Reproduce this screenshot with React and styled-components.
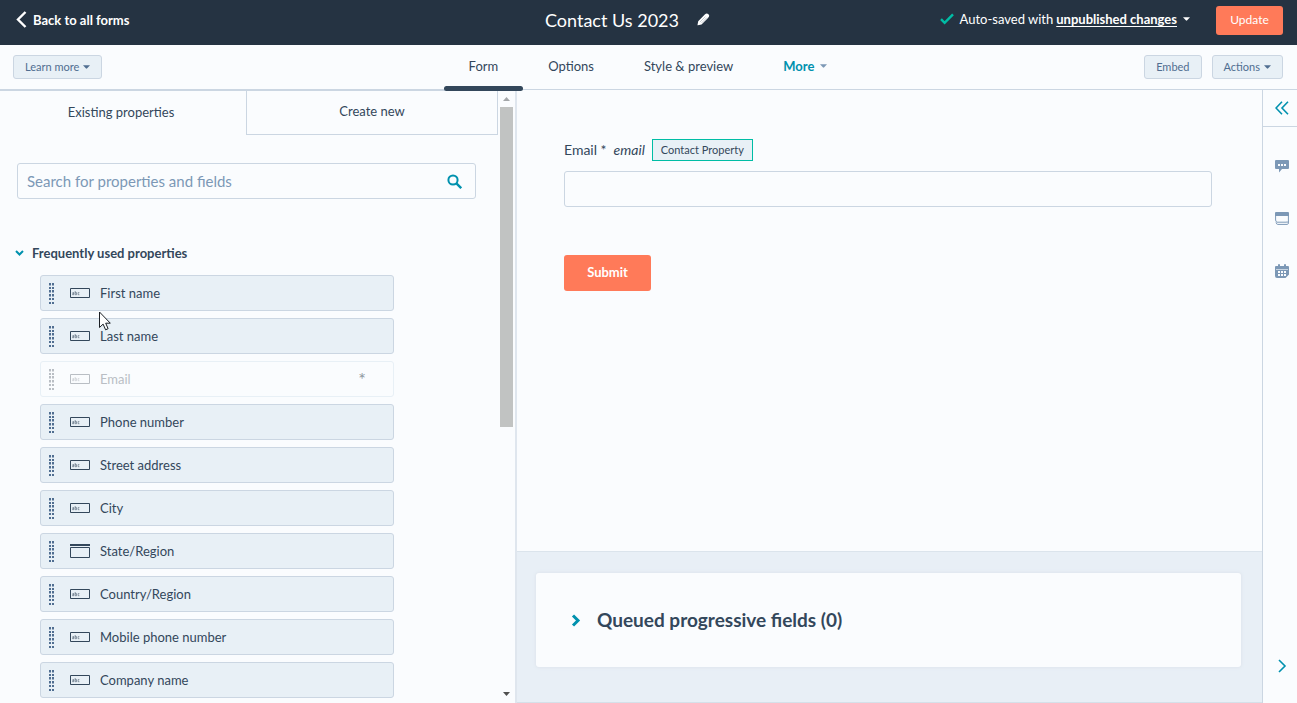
import styled, { createGlobalStyle, css } from 'styled-components';

const GlobalStyle = createGlobalStyle`
  * {
    box-sizing: border-box;
  }

  body {
    margin: 0;
    background: #fafcfe;
    color: #33475b;
    font-family: Lato, 'Open Sans', sans-serif;
    font-size: 14px;
    line-height: 20px;
  }

  button,
  input {
    font-family: inherit;
    color: inherit;
  }

  button {
    padding: 0;
    border: 0;
    background: none;
    cursor: pointer;
  }

  svg {
    display: block;
    flex: none;
  }
`;

const Page = styled.div`
  display: flex;
  flex-direction: column;
  height: 100vh;
  overflow: hidden;
`;

const TopBar = styled.header`
  display: grid;
  grid-template-columns: 1fr auto 1fr;
  align-items: center;
  flex: none;
  height: 45px;
  padding: 0 14px 4px 16px;
  background: #253342;
  color: #fff;
`;

const BackLink = styled.a`
  display: flex;
  align-items: center;
  justify-self: start;
  gap: 6px;
  padding-bottom: 2px;
  color: #fff;
  font-size: 13px;
  font-weight: 700;
  text-decoration: none;
`;

const TitleGroup = styled.div`
  display: flex;
  align-items: center;
  gap: 18px;
  padding: 0 44px 2px 0;
`;

const Title = styled.h1`
  margin: 0;
  font-size: 18px;
  font-weight: 400;
  line-height: 24px;
`;

const SaveArea = styled.div`
  display: flex;
  align-items: center;
  justify-self: end;
`;

const SaveState = styled.div`
  display: flex;
  align-items: center;
  padding-bottom: 3px;
  font-size: 13px;
`;

const SaveStatus = styled.p`
  margin: 0 0 0 6px;
`;

const ChangesButton = styled.button`
  display: inline-flex;
  align-items: center;
  gap: 6px;
  margin-left: 3px;
  font-size: 13px;
  font-weight: 700;
`;

const Underlined = styled.span`
  text-decoration: underline;
  text-underline-offset: 2px;
`;

const UpdateButton = styled.button`
  height: 29px;
  min-width: 67px;
  margin-left: 26px;
  padding-bottom: 2px;
  border-radius: 3px;
  background: #ff7a59;
  font-size: 12px;
`;

const SubHeader = styled.div`
  display: grid;
  grid-template-columns: 1fr auto 1fr;
  flex: none;
  height: 45px;
  padding: 0 14px 0 13px;
  border-bottom: 1px solid #cbd6e2;
`;

const ButtonGroup = styled.div`
  display: flex;
  align-items: center;
  justify-content: ${({ $end }) => ($end ? 'flex-end' : 'flex-start')};
  gap: 10px;
`;

const SmallButton = styled.button`
  display: flex;
  align-items: center;
  justify-content: center;
  gap: 4px;
  height: 24px;
  padding: 0 11px 1px;
  border: 1px solid #cbd6e2;
  border-radius: 3px;
  background: #e8f0f6;
  color: #506e91;
  font-size: 11px;
`;

const EditorTabs = styled.nav`
  display: flex;
`;

const EditorTab = styled.button`
  position: relative;
  display: flex;
  align-items: center;
  gap: 6px;
  padding: 0 25px 2px;
  font-size: 13px;

  ${({ $active }) =>
    $active &&
    css`
      &::after {
        content: '';
        position: absolute;
        left: 0;
        right: 0;
        bottom: -2px;
        height: 5px;
        border-radius: 3px;
        background: #33475b;
      }
    `}

  ${({ $more }) =>
    $more &&
    css`
      color: #0091ae;
      font-weight: 700;
    `}
`;

const Workspace = styled.div`
  display: flex;
  flex: 1;
  min-height: 0;
`;

const Panel = styled.aside`
  display: flex;
  flex: 0 0 515px;
  min-height: 0;
`;

const PanelContent = styled.div`
  flex: 1;
  overflow: hidden;
`;

const PanelTabs = styled.div`
  display: flex;
`;

const PanelTab = styled.button`
  flex: 1;
  height: 45px;
  padding-bottom: 3px;
  border-top: 1px solid #cbd6e2;
  font-size: 13px;

  ${({ $active }) =>
    $active
      ? css`
          padding-right: 4px;
        `
      : css`
          flex: 0 0 252px;
          border: 1px solid #cbd6e2;
        `}
`;

const SearchBox = styled.div`
  display: flex;
  align-items: center;
  height: 36px;
  margin: 28px 22px 0 17px;
  padding: 0 13px 0 9px;
  border: 1px solid #cbd6e2;
  border-radius: 3px;
`;

const SearchInput = styled.input`
  flex: 1;
  min-width: 0;
  padding: 0;
  border: 0;
  outline: 0;
  background: none;
  font-size: 15px;

  &::placeholder {
    color: #7c98b6;
    opacity: 1;
  }
`;

const GroupToggle = styled.button`
  display: flex;
  align-items: center;
  gap: 8px;
  height: 20px;
  margin: 44px 0 0 15px;
  padding-bottom: 1px;
  font-size: 13px;
  font-weight: 700;
`;

const PropertyList = styled.ul`
  display: flex;
  flex-direction: column;
  gap: 7px;
  margin: 12px 104px 0 40px;
  padding: 0;
  list-style: none;
`;

const PropertyRow = styled.li`
  display: flex;
  align-items: center;
  height: 36px;
  padding: 0 27px 0 8px;
  border: 1px solid #cbd6e2;
  border-radius: 3px;
  background: #e8f0f6;
  cursor: grab;

  ${({ $used }) =>
    $used &&
    css`
      border-color: #e8f0f6;
      background: transparent;
      color: #b9bec4;
    `}
`;

const PropertyName = styled.span`
  flex: 1;
  margin-left: 10px;
  font-size: 13px;
`;

const RequiredMark = styled.span`
  color: #8f979f;
  font-size: 18px;
`;

const TypeIcon = styled.span`
  margin-left: 15px;
`;

const ScrollTrack = styled.div`
  display: flex;
  flex-direction: column;
  align-items: center;
  width: 17px;
  padding: 7px 0;
`;

const ScrollThumb = styled.div`
  flex: 0 0 320px;
  width: 13px;
  margin: 6px 0 auto;
  background: #c1c3c2;
`;

const Canvas = styled.main`
  display: flex;
  flex: 1;
  flex-direction: column;
  min-width: 0;
  border-left: 2px solid #dfe6ee;
`;

const FormPreview = styled.form`
  flex: 1;
  padding: 49px 50px 0 47px;
`;

const FieldLabel = styled.div`
  display: flex;
  align-items: center;
  gap: 7px;
  height: 22px;
`;

const InternalName = styled.em`
  font-size: 14px;
`;

const ContactTag = styled.span`
  padding: 0 8px;
  border: 1px solid #00bda5;
  background: #e8f0f6;
  font-size: 11px;
`;

const FieldInput = styled.input`
  display: block;
  width: 100%;
  height: 36px;
  margin-top: 10px;
  padding: 0 10px;
  border: 1px solid #cbd6e2;
  border-radius: 3px;
  background: transparent;
  font-size: 14px;
`;

const SubmitButton = styled.button`
  height: 36px;
  min-width: 87px;
  margin-top: 48px;
  padding-bottom: 2px;
  border-radius: 3px;
  background: #ff7a59;
  color: #fff;
  font-size: 13px;
  font-weight: 700;
`;

const QueuedSection = styled.section`
  padding: 21px 21px 35px 19px;
  border-top: 1px solid #dbe4ec;
  border-bottom: 1px solid #d5e0e9;
  background: #e8eff6;
`;

const QueuedCard = styled.div`
  padding: 35px;
  border-radius: 3px;
  background: #fafcfe;
  box-shadow: 0 0 3px 1px #dfe6ee;
`;

const QueuedToggle = styled.button`
  display: flex;
  align-items: center;
  gap: 16px;
  font-size: 19px;
  font-weight: 700;
  line-height: 24px;
`;

const Rail = styled.aside`
  display: flex;
  flex: 0 0 35px;
  flex-direction: column;
  align-items: center;
  padding: 0 0 30px 4px;
  border-left: 1px solid #cbd6e2;
`;

const RailCollapse = styled.button`
  display: flex;
  align-items: center;
  justify-content: center;
  align-self: stretch;
  height: 37px;
  margin-left: -4px;
  padding-left: 4px;
  border-bottom: 1px solid #cbd6e2;
`;

const RailTools = styled.div`
  display: flex;
  flex: 1;
  flex-direction: column;
  gap: 39px;
  padding-top: 33px;
`;

const Pointer = styled.svg`
  position: absolute;
  top: 311px;
  left: 98px;
  pointer-events: none;
`;

const Caret = ({ color = 'currentColor' }) => (
  <svg width="7" height="4" viewBox="0 0 8 4" fill={color}>
    <path d="M0 0h8L4.8 3.5q-.8.8-1.6 0z" />
  </svg>
);

const Chevron = ({ d, width, height, stroke = 2 }) => (
  <svg width={width} height={height} viewBox={`0 0 ${width} ${height}`} fill="none" stroke="#0091ae" strokeWidth={stroke}>
    <path d={d} />
  </svg>
);

const PencilIcon = () => (
  <svg width="13" height="13" viewBox="0 0 13 13" fill="#fff">
    <path d="M1.2 8.2 7.8 1.5q1.5-1.4 2.8-.8 1.4.6 1.6 1.9.1 1.2-1.2 2.5L4.5 11.6.8 12.3Q.4 12.4.5 12z" />
    <path d="m3 9 5.4-5.4M4.4 10.1l5.4-5.4" stroke="#8c96a0" strokeWidth=".5" />
  </svg>
);

const CheckIcon = () => (
  <svg width="14" height="12" viewBox="0 0 14 12" fill="none" stroke="#00bda5" strokeWidth="2.4">
    <path d="m1 6.2 3.6 3.6L13 1.4" />
  </svg>
);

const SearchIcon = () => (
  <svg width="15" height="15" viewBox="0 0 15 15" fill="none" stroke="#0091ae">
    <circle cx="6" cy="6" r="4.6" strokeWidth="2" />
    <path d="m9.4 9.4 4.8 4.8" strokeWidth="2.4" />
  </svg>
);

const DragHandle = ({ color }) => (
  <svg width="6" height="21" viewBox="0 0 6 21" fill={color}>
    {[0, 4, 7, 11, 15, 19].map((y) => (
      <path key={y} d={`M0 ${y}h2v2H0zM3 ${y}h2v2H3z`} />
    ))}
    {[2, 9, 13].map((y) => (
      <path key={y} d={`M0 ${y}h2v1H0zM3 ${y}h2v1H3z`} opacity=".5" />
    ))}
  </svg>
);

const TextIcon = ({ color }) => (
  <svg width="20" height="10" viewBox="0 0 20 10" fill="none" stroke={color}>
    <path d="M.5.5h19v9H.5z" />
    <path
      d="M2.5 4.5h1.3v2.2H2.6V5.6h1.2M5.2 3v3.7h1.3V4.6H5.2M9.4 4.6H8.1v2.1h1.3"
      strokeWidth=".6"
      opacity=".85"
    />
  </svg>
);

const SelectIcon = ({ color }) => (
  <svg width="20" height="14" viewBox="0 0 20 14" fill="none" stroke={color}>
    <path d="M0 1h20" strokeWidth="2" />
    <path d="M.5 3.5h19v10H.5z" />
  </svg>
);

const ChatIcon = () => (
  <svg width="14" height="13" viewBox="0 0 14 13">
    <path d="M1 0h12q1 0 1 1v7q0 1-1 1H7l-3 3.5V9H1Q0 9 0 8V1q0-1 1-1z" fill="#7c98b6" />
    <path d="M3 4h2v2H3zM6 4h2v2H6zM9 4h2v2H9z" fill="#fafcfe" />
  </svg>
);

const WindowIcon = () => (
  <svg width="14" height="13" viewBox="0 0 14 13" fill="none" stroke="#7c98b6">
    <path d="M1 0h12q1 0 1 1v3H0V1q0-1 1-1z" fill="#7c98b6" stroke="none" />
    <path d="M.6 3v5q.2 2 1.4 2.2h9.5M13.4 3v7M1 10.4q.4 2 1.8 2h9.4q1.5 0 1.3-2.3h-2.2" />
  </svg>
);

const CalendarIcon = () => (
  <svg width="14" height="14" viewBox="0 0 14 14">
    <path
      d="M1 2h2V.5q1-1 2 0V2h4V.5q1-1 2 0V2h2q1 0 1 1v7.5L10.5 14H2q-2 0-2-2V3q0-1 1-1z"
      fill="#7c98b6"
    />
    <path d="M3 7h2v2H3zM6 7h2v2H6zM9 7h2v2H9zM3 10h2v2H3zM6 10h2v2H6zM9 10h2v2H9z" fill="#fafcfe" />
    <path d="M1 5h12v1H1z" fill="#fafcfe" opacity=".6" />
  </svg>
);

const properties = [
  { name: 'First name' },
  { name: 'Last name' },
  { name: 'Email', used: true },
  { name: 'Phone number' },
  { name: 'Street address' },
  { name: 'City' },
  { name: 'State/Region', select: true },
  { name: 'Country/Region' },
  { name: 'Mobile phone number' },
  { name: 'Company name' },
];

const Property = ({ name, used, select }) => (
  <PropertyRow $used={used}>
    <DragHandle color={used ? '#b9bec4' : '#506e91'} />
    <TypeIcon>
      {select ? <SelectIcon color="#33475b" /> : <TextIcon color={used ? '#b9bec4' : '#33475b'} />}
    </TypeIcon>
    <PropertyName>{name}</PropertyName>
    {used && <RequiredMark>*</RequiredMark>}
  </PropertyRow>
);

const App = () => (
  <Page>
    <GlobalStyle />
    <TopBar>
      <BackLink href="#forms">
        <svg width="11" height="17" viewBox="0 0 11 17" fill="none" stroke="#fff" strokeWidth="2.4">
          <path d="M9.5 1 2 8.5 9.5 16" />
        </svg>
        Back to all forms
      </BackLink>
      <TitleGroup>
        <Title>Contact Us 2023</Title>
        <button aria-label="Edit form name">
          <PencilIcon />
        </button>
      </TitleGroup>
      <SaveArea>
        <SaveState>
          <CheckIcon />
          <SaveStatus>Auto-saved with</SaveStatus>
          <ChangesButton>
            <Underlined>unpublished changes</Underlined>
            <Caret />
          </ChangesButton>
        </SaveState>
        <UpdateButton>Update</UpdateButton>
      </SaveArea>
    </TopBar>

    <SubHeader>
      <ButtonGroup>
        <SmallButton>
          Learn more <Caret />
        </SmallButton>
      </ButtonGroup>
      <EditorTabs>
        <EditorTab $active>Form</EditorTab>
        <EditorTab>Options</EditorTab>
        <EditorTab>Style &amp; preview</EditorTab>
        <EditorTab $more>
          More <Caret color="#7c98b6" />
        </EditorTab>
      </EditorTabs>
      <ButtonGroup $end>
        <SmallButton>Embed</SmallButton>
        <SmallButton>
          Actions <Caret />
        </SmallButton>
      </ButtonGroup>
    </SubHeader>

    <Workspace>
      <Panel>
        <PanelContent>
          <PanelTabs>
            <PanelTab $active>Existing properties</PanelTab>
            <PanelTab>Create new</PanelTab>
          </PanelTabs>
          <SearchBox>
            <SearchInput
              type="text"
              aria-label="Search for properties and fields"
              placeholder="Search for properties and fields"
            />
            <SearchIcon />
          </SearchBox>
          <GroupToggle aria-expanded="true">
            <Chevron d="m1 1 3.5 3.5L8 1" width={9} height={6} />
            Frequently used properties
          </GroupToggle>
          <PropertyList>
            {properties.map((property) => (
              <Property key={property.name} {...property} />
            ))}
          </PropertyList>
        </PanelContent>
        <ScrollTrack aria-hidden="true">
          <svg width="7" height="4" viewBox="0 0 7 4" fill="#a3a6a9">
            <path d="M0 4 3.5 0 7 4z" />
          </svg>
          <ScrollThumb />
          <svg width="7" height="4" viewBox="0 0 7 4" fill="#505050">
            <path d="M0 0h7L3.5 4z" />
          </svg>
        </ScrollTrack>
      </Panel>

      <Canvas>
        <FormPreview>
          <FieldLabel>
            <label htmlFor="email">Email *</label>
            <InternalName>email</InternalName>
            <ContactTag>Contact Property</ContactTag>
          </FieldLabel>
          <FieldInput id="email" type="email" />
          <SubmitButton type="button">Submit</SubmitButton>
        </FormPreview>
        <QueuedSection>
          <QueuedCard>
            <QueuedToggle aria-expanded="false">
              <Chevron d="m2 1.5 5 5-5 5" width={10} height={13} stroke={3} />
              Queued progressive fields (0)
            </QueuedToggle>
          </QueuedCard>
        </QueuedSection>
      </Canvas>

      <Rail>
        <RailCollapse aria-label="Expand sidebar">
          <Chevron d="M7 .8 1 7l6 6.2M13 .8 7 7l6 6.2" width={14} height={14} stroke={1.6} />
        </RailCollapse>
        <RailTools>
          <button aria-label="Comments">
            <ChatIcon />
          </button>
          <button aria-label="Preview">
            <WindowIcon />
          </button>
          <button aria-label="Calendar">
            <CalendarIcon />
          </button>
        </RailTools>
        <button aria-label="Next">
          <Chevron d="m1 1 6 6-6 6" width={9} height={14} stroke={1.6} />
        </button>
      </Rail>
    </Workspace>

    <Pointer width="13" height="20" viewBox="0 0 13 20" fill="#fff" stroke="#1b1f24">
      <path d="M1.5 1v15.5l3.6-3.4 2.5 5.7 2.5-1.1-2.4-5.5h4.6z" />
    </Pointer>
  </Page>
);

export default App;
